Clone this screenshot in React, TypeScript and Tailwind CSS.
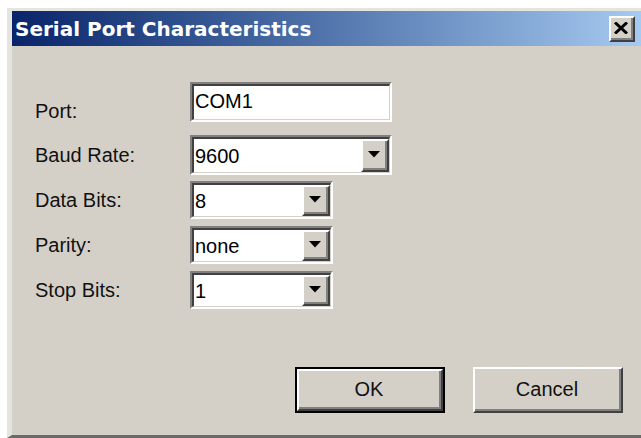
import React from 'react';

const sans = { fontFamily: '"Liberation Sans", Arial, sans-serif' };

// Classic raised 3D edge used by buttons
function Raised({ className, children }: { className?: string; children?: React.ReactNode }) {
  return (
    <div className={`border-t-2 border-l-2 border-t-white border-l-white border-b-2 border-r-2 border-b-[#404040] border-r-[#404040] bg-[#d4d0c8] ${className ?? ''}`}>
      <div className="w-full h-full border-b-2 border-r-2 border-b-[#808080] border-r-[#808080] flex items-center justify-center">
        {children}
      </div>
    </div>
  );
}

// Sunken field frame used by text boxes and combo boxes
function Sunken({ className, children }: { className?: string; children?: React.ReactNode }) {
  return (
    <div className={`border-t-2 border-l-2 border-t-[#808080] border-l-[#808080] border-b-2 border-r-2 border-b-white border-r-white ${className ?? ''}`}>
      <div className="w-full h-full border-t-2 border-l-2 border-t-[#404040] border-l-[#404040] border-b border-r border-b-[#d4d0c8] border-r-[#d4d0c8] bg-white flex">
        {children}
      </div>
    </div>
  );
}

function Combo({ value, width }: { value: string; width: string }) {
  return (
    <Sunken className={`${width} h-full`}>
      <div className="flex-1 flex items-center pl-[1px] text-[20px] text-black leading-none">{value}</div>
      <Raised className="w-[28px] h-full">
        <svg width="12" height="7" viewBox="0 0 12 7">
          <path d="M0 0 H12 L6 6.5 Z" fill="#000" />
        </svg>
      </Raised>
    </Sunken>
  );
}

function Row({ label, children, className }: { label: string; children: React.ReactNode; className?: string }) {
  return (
    <div className={`flex items-center ${className ?? ''}`}>
      <div className="w-[155px] text-[20px] text-[#111] leading-none">{label}</div>
      {children}
    </div>
  );
}

export default function App() {
  return (
    <div className="w-[641px] h-[438px] bg-white overflow-hidden pt-[8px] pl-[7px]" style={sans}>
      <div className="w-[634px] h-[430px] flex flex-col bg-[#d4d0c8] border-t-[3px] border-l-[5px] border-t-[#e6e4de] border-l-[#e6e4de] border-b-[3px] border-b-[#6a6a6a]">
        {/* title bar */}
        <div className="h-[35px] flex items-center justify-between pl-[3px] pr-[6px] bg-gradient-to-r from-[#0a246a] to-[#a6caf0]">
          <span className="text-white font-bold text-[20px] leading-none" style={{ fontFamily: '"DejaVu Sans", Verdana, sans-serif' }}>
            Serial Port Characteristics
          </span>
          <Raised className="w-[26px] h-[26px]">
            <svg width="14" height="12" viewBox="0 0 14 12">
              <path d="M1 0.5 L13 11.5 M13 0.5 L1 11.5" stroke="#000" strokeWidth="3" />
            </svg>
          </Raised>
        </div>

        {/* form */}
        <div className="flex-1 flex flex-col pl-[23px] pt-[36px]">
          <div className="flex items-start h-[40px]">
            <div className="w-[155px] text-[20px] text-[#111] leading-none mt-[19px]">Port:</div>
            <Sunken className="w-[202px] h-full">
              <div className="flex-1 pl-[1px] pt-[5px] text-[20px] text-black leading-none">COM1</div>
            </Sunken>
          </div>
          <Row label="Baud Rate:" className="h-[40px] mt-[13px]">
            <Combo value="9600" width="w-[202px]" />
          </Row>
          <Row label="Data Bits:" className="h-[38px] mt-[6px]">
            <Combo value="8" width="w-[143px]" />
          </Row>
          <Row label="Parity:" className="h-[38px] mt-[7px]">
            <Combo value="none" width="w-[143px]" />
          </Row>
          <Row label="Stop Bits:" className="h-[38px] mt-[7px]">
            <Combo value="1" width="w-[143px]" />
          </Row>

          {/* buttons */}
          <div className="flex gap-[28px] mt-[58px] pl-[260px]">
            <div className="border-2 border-black">
              <Raised className="w-[146px] h-[42px]">
                <span className="text-[20px] text-[#111] leading-none">OK</span>
              </Raised>
            </div>
            <Raised className="w-[150px] h-[46px]">
              <span className="text-[20px] text-[#111] leading-none">Cancel</span>
            </Raised>
          </div>
        </div>
      </div>
    </div>
  );
}
